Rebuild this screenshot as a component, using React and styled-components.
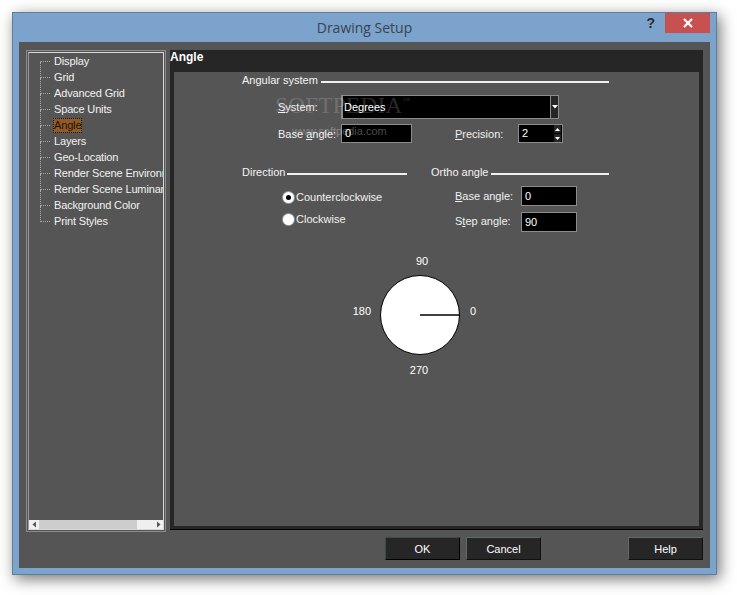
import React from "react";
import styled, { createGlobalStyle } from "styled-components";

const GlobalStyle = createGlobalStyle`
  * { box-sizing: border-box; }
  html, body { margin: 0; padding: 0; background: #fff; }
  body { font-family: "Liberation Sans", Arial, sans-serif; font-size: 11px; color: #fff; }
`;

const treeItems = [
  "Display",
  "Grid",
  "Advanced Grid",
  "Space Units",
  "Angle",
  "Layers",
  "Geo-Location",
  "Render Scene Environment",
  "Render Scene Luminance",
  "Background Color",
  "Print Styles",
];

const Underlined = ({ before = "", letter, after = "" }) => (
  <>
    {before}
    <u>{letter}</u>
    {after}
  </>
);

const App = () => {
  return (
    <Page>
      <GlobalStyle />
      <Window>
        <TitleBar>
          <span />
          <Title>Drawing Setup</Title>
          <TitleControls>
            <HelpMark>?</HelpMark>
            <CloseButton>
              <svg width="10" height="10" viewBox="0 0 10 10">
                <path d="M1 1 L9 9 M9 1 L1 9" stroke="#fff" strokeWidth="2.2" fill="none" />
              </svg>
            </CloseButton>
          </TitleControls>
        </TitleBar>
        <Client>
          <Main>
            <Sidebar>
              <SidebarInner>
                <Tree>
                  {treeItems.map((item, i) => (
                    <TreeRow key={item}>
                      <Connector $first={i === 0} $last={i === treeItems.length - 1} />
                      <TreeLabel $selected={item === "Angle"}>{item}</TreeLabel>
                    </TreeRow>
                  ))}
                </Tree>
                <ScrollBar>
                  <ScrollArrow>
                    <svg width="7" height="7" viewBox="0 0 7 7">
                      <path d="M5 0.5 L1.5 3.5 L5 6.5 Z" fill="#555" />
                    </svg>
                  </ScrollArrow>
                  <ScrollThumb />
                  <ScrollArrow>
                    <svg width="7" height="7" viewBox="0 0 7 7">
                      <path d="M2 0.5 L5.5 3.5 L2 6.5 Z" fill="#555" />
                    </svg>
                  </ScrollArrow>
                </ScrollBar>
              </SidebarInner>
            </Sidebar>
            <Panel>
              <PanelHeader>Angle</PanelHeader>
              <Content>
                <AngularGroup>
                  <GroupTitle $gap={3}>Angular system</GroupTitle>
                  <GroupLine />
                </AngularGroup>
                <SystemRow>
                  <FieldLabel>
                    <Underlined letter="S" after="ystem:" />
                  </FieldLabel>
                  <Select>
                    <SelectValue>Degrees</SelectValue>
                    <SelectButton>
                      <svg width="6" height="4" viewBox="0 0 6 4">
                        <path d="M0 0 H6 L3 3.5 Z" fill="#fff" />
                      </svg>
                    </SelectButton>
                  </Select>
                </SystemRow>
                <BaseRow>
                  <FieldLabel>
                    <Underlined before="Base " letter="a" after="ngle:" />
                  </FieldLabel>
                  <TextBox $width={71} $height={19}>0</TextBox>
                  <PrecisionLabel>
                    <Underlined letter="P" after="recision:" />
                  </PrecisionLabel>
                  <Spinner>
                    <span>2</span>
                    <SpinButtons>
                      <SpinButton>
                        <svg width="5" height="3" viewBox="0 0 5 3">
                          <path d="M0 3 H5 L2.5 0 Z" fill="#fff" />
                        </svg>
                      </SpinButton>
                      <SpinButton>
                        <svg width="5" height="3" viewBox="0 0 5 3">
                          <path d="M0 0 H5 L2.5 3 Z" fill="#fff" />
                        </svg>
                      </SpinButton>
                    </SpinButtons>
                  </Spinner>
                </BaseRow>

                <Columns>
                  <DirectionColumn>
                    <Group>
                      <GroupTitle $gap={2}>Direction</GroupTitle>
                      <GroupLine />
                    </Group>
                    <RadioList>
                      <RadioRow>
                        <Radio $checked />
                        Counterclockwise
                      </RadioRow>
                      <RadioRow>
                        <Radio />
                        Clockwise
                      </RadioRow>
                    </RadioList>
                  </DirectionColumn>
                  <OrthoColumn>
                    <Group>
                      <GroupTitle $gap={3}>Ortho angle</GroupTitle>
                      <GroupLine />
                    </Group>
                    <OrthoFields>
                      <OrthoRow>
                        <OrthoLabel>
                          <Underlined letter="B" after="ase angle:" />
                        </OrthoLabel>
                        <TextBox $width={56} $height={20}>0</TextBox>
                      </OrthoRow>
                      <OrthoRow>
                        <OrthoLabel $raise={3}>
                          <Underlined before="S" letter="t" after="ep angle:" />
                        </OrthoLabel>
                        <TextBox $width={56} $height={20}>90</TextBox>
                      </OrthoRow>
                    </OrthoFields>
                  </OrthoColumn>
                </Columns>

                <Dial>
                  <DialTop>90</DialTop>
                  <DialLeft>180</DialLeft>
                  <svg width="80" height="80" viewBox="0 0 80 80">
                    <circle cx="40" cy="40" r="39.5" fill="#fff" stroke="#000" strokeWidth="1" />
                    <path d="M40 40 H80" stroke="#000" strokeWidth="1.4" />
                  </svg>
                  <DialRight>0</DialRight>
                  <DialBottom>270</DialBottom>
                </Dial>

                <Watermark>
                  SOFTPEDIA<sup>™</sup>
                </Watermark>
                <WatermarkUrl>www.softpedia.com</WatermarkUrl>
              </Content>
            </Panel>
          </Main>
          <Footer>
            <Button $default>OK</Button>
            <Button>Cancel</Button>
            <HelpButton>Help</HelpButton>
          </Footer>
        </Client>
      </Window>
    </Page>
  );
};

export default App;

const Page = styled.div`
  width: 737px;
  height: 595px;
  padding: 12px 20px 20px 12px;
  overflow: hidden;
  background: #fff;
`;

const Window = styled.div`
  width: 705px;
  height: 563px;
  display: flex;
  flex-direction: column;
  padding: 0 6px 6px;
  background: #7ba3cc;
  border: 1px solid #5d7d9c;
  box-shadow: 3px 4px 14px rgba(0, 0, 0, 0.55);
`;

const TitleBar = styled.div`
  height: 29px;
  flex: none;
  display: grid;
  grid-template-columns: 1fr auto 1fr;
`;

const Title = styled.div`
  font-family: "Open Sans", sans-serif;
  font-size: 14px;
  color: #3a444e;
  line-height: 30px;
`;

const TitleControls = styled.div`
  display: flex;
  justify-content: flex-end;
  align-items: flex-start;
`;

const HelpMark = styled.span`
  font-family: "Liberation Sans", sans-serif;
  font-size: 14px;
  font-weight: 700;
  color: #2b2b2b;
  line-height: 20px;
  margin-right: 10px;
`;

const CloseButton = styled.div`
  width: 45px;
  height: 20px;
  background: #c75050;
  display: flex;
  align-items: center;
  justify-content: center;
`;

const Client = styled.div`
  flex: 1;
  display: flex;
  flex-direction: column;
  padding: 8px 7px 8px;
  background: #555;
`;

const Main = styled.div`
  display: flex;
  gap: 4px;
  height: 482px;
`;

const Sidebar = styled.div`
  width: 140px;
  flex: none;
  padding: 1px;
  border: 1px solid #8c8c8c;
`;

const SidebarInner = styled.div`
  height: 100%;
  display: flex;
  flex-direction: column;
  justify-content: space-between;
  border: 1px solid #d8d8d8;
  border-left-color: #9a9a9a;
  overflow: hidden;
`;

const Tree = styled.div`
  padding: 0 0 0 11px;
`;

const TreeRow = styled.div`
  height: 16px;
  display: flex;
  align-items: center;
  white-space: nowrap;
`;

const Connector = styled.span`
  width: 10px;
  height: 16px;
  flex: none;
  margin-right: 3px;

  &::before,
  &::after {
    content: "";
    display: block;
    height: 8px;
  }

  &::before {
    border-bottom: 1px dotted #aaa;
    border-left: ${(p) => (p.$first ? "1px solid transparent" : "1px dotted #aaa")};
  }

  &::after {
    border-left: ${(p) => (p.$last ? "1px solid transparent" : "1px dotted #aaa")};
  }
`;

const TreeLabel = styled.span`
  height: 15px;
  line-height: 15px;
  padding: 0 1px;
  letter-spacing: -0.15px;
  color: ${(p) => (p.$selected ? "#1e1408" : "#f2f2f2")};
  background: ${(p) => (p.$selected ? "#8f5a26" : "transparent")};
  outline: ${(p) => (p.$selected ? "1px dotted #111" : "none")};
  outline-offset: -1px;
`;

const ScrollBar = styled.div`
  height: 9px;
  flex: none;
  display: flex;
  align-items: center;
  background: #efefef;
`;

const ScrollArrow = styled.span`
  width: 10px;
  height: 9px;
  flex: none;
  display: flex;
  align-items: center;
  justify-content: center;
`;

const ScrollThumb = styled.div`
  width: 98px;
  height: 9px;
  background: #cdcdcd;
  margin-right: auto;
`;

const Panel = styled.div`
  flex: 1;
  height: 480px;
  display: flex;
  flex-direction: column;
  background: #262626;
  padding: 0 4px 3px;
  border-bottom: 1px solid #000;
`;

const PanelHeader = styled.div`
  height: 22px;
  flex: none;
  margin-left: -4px;
  font-size: 12px;
  font-weight: 700;
  line-height: 14px;
  color: #fff;
`;

const Content = styled.div`
  position: relative;
  flex: 1;
  padding-left: 68px;
  background: #555;
`;

const Watermark = styled.div`
  position: absolute;
  left: 101px;
  top: 20px;
  font-family: "Liberation Serif", serif;
  font-size: 23px;
  letter-spacing: 0.4px;
  line-height: 28px;
  color: rgba(255, 255, 255, 0.18);

  sup {
    font-size: 8px;
    vertical-align: 10px;
    line-height: 0;
  }
`;

const WatermarkUrl = styled.div`
  position: absolute;
  left: 118px;
  top: 52px;
  font-size: 11px;
  line-height: 14px;
  color: rgba(255, 255, 255, 0.3);
`;

const Group = styled.div`
  height: 16px;
  display: flex;
  align-items: center;
  width: 100%;
`;

const AngularGroup = styled(Group)`
  width: 367px;
`;

const GroupTitle = styled.span`
  flex: none;
  color: #f4f4f4;
  line-height: 14px;
  margin-right: ${(p) => p.$gap}px;
`;

const GroupLine = styled.span`
  flex: 1;
  height: 2px;
  margin-top: 3px;
  background: #f0f0f0;
`;

const SystemRow = styled.div`
  display: flex;
  align-items: center;
  margin: 7px 0 0 36px;
`;

const BaseRow = styled(SystemRow)`
  margin-top: 5px;
`;

const FieldLabel = styled.span`
  width: 63px;
  flex: none;
  white-space: nowrap;
  color: #f0f0f0;
`;

const Select = styled.div`
  width: 218px;
  height: 24px;
  display: flex;
  background: #000;
  border: 1px solid #8c8c8c;
  border-left-width: 2px;
`;

const SelectValue = styled.span`
  flex: 1;
  padding-left: 1px;
  line-height: 22px;
  color: #fff;
`;

const SelectButton = styled.span`
  width: 8px;
  display: flex;
  align-items: center;
  justify-content: center;
  background: #262626;
  border-left: 1px solid #8c8c8c;
`;

const TextBox = styled.div`
  width: ${(p) => p.$width}px;
  height: ${(p) => p.$height}px;
  flex: none;
  background: #000;
  border: 1px solid #8c8c8c;
  padding-left: 3px;
  line-height: ${(p) => p.$height - 2}px;
  color: #fff;
`;

const PrecisionLabel = styled(FieldLabel)`
  margin-left: 43px;
`;

const Spinner = styled.div`
  width: 45px;
  height: 19px;
  display: flex;
  justify-content: space-between;
  background: #000;
  border: 1px solid #8c8c8c;
  padding-left: 3px;
  line-height: 17px;
  color: #fff;
`;

const SpinButtons = styled.div`
  width: 7px;
  margin-right: 1px;
  display: flex;
  flex-direction: column;
  justify-content: space-between;
`;

const SpinButton = styled.span`
  height: 8px;
  display: flex;
  align-items: center;
  justify-content: center;
  background: #262626;
`;

const Columns = styled.div`
  display: flex;
  gap: 24px;
  margin-top: 21px;
  width: 367px;
`;

const DirectionColumn = styled.div`
  width: 165px;
  flex: none;
`;

const OrthoColumn = styled.div`
  flex: 1;
`;

const RadioList = styled.div`
  display: flex;
  flex-direction: column;
  gap: 6px;
  margin-top: 9px;
  padding-left: 41px;
`;

const RadioRow = styled.div`
  height: 16px;
  display: flex;
  align-items: center;
  gap: 2px;
  color: #f2f2f2;
`;

const Radio = styled.span`
  width: 11px;
  height: 11px;
  flex: none;
  border-radius: 50%;
  background: #fff;
  box-shadow: 0 0 0 1px #999;
  display: flex;
  align-items: center;
  justify-content: center;

  &::after {
    content: "";
    width: 5px;
    height: 5px;
    border-radius: 50%;
    background: ${(p) => (p.$checked ? "#000" : "transparent")};
  }
`;

const OrthoFields = styled.div`
  display: flex;
  flex-direction: column;
  gap: 6px;
  margin-top: 6px;
  padding-left: 24px;
`;

const OrthoRow = styled.div`
  display: flex;
  align-items: center;
`;

const OrthoLabel = styled.span`
  width: 66px;
  flex: none;
  margin-bottom: ${(p) => p.$raise || 0}px;
  color: #f0f0f0;
`;

const Dial = styled.div`
  display: grid;
  grid-template-columns: 40px 80px 26px;
  grid-template-rows: 23px 80px 30px;
  margin: 20px 0 0 98px;

  svg {
    grid-column: 2;
    grid-row: 2;
    display: block;
  }
`;

const DialTop = styled.span`
  grid-column: 2;
  grid-row: 1;
  justify-self: center;
  margin-left: 4px;
  line-height: 18px;
`;

const DialLeft = styled.span`
  grid-column: 1;
  grid-row: 2;
  justify-self: end;
  margin: 28px 9px 0 0;
  line-height: 16px;
`;

const DialRight = styled.span`
  grid-column: 3;
  grid-row: 2;
  margin: 28px 0 0 10px;
  line-height: 16px;
`;

const DialBottom = styled.span`
  grid-column: 2;
  grid-row: 3;
  justify-self: center;
  margin: 7px 0 0 -2px;
  line-height: 16px;
`;

const Footer = styled.div`
  display: flex;
  justify-content: flex-end;
  margin-top: 5px;
  height: 23px;
`;

const Button = styled.div`
  width: 75px;
  height: 23px;
  margin-right: 6px;
  display: flex;
  align-items: center;
  justify-content: center;
  background: #262626;
  color: #fff;
  border: 1px solid;
  border-color: ${(p) => (p.$default ? "#3f4a4a #000 #000 #3f4a4a" : "#5b6b6b #111 #111 #5b6b6b")};
`;

const HelpButton = styled(Button)`
  margin: 0 0 0 81px;
`;
